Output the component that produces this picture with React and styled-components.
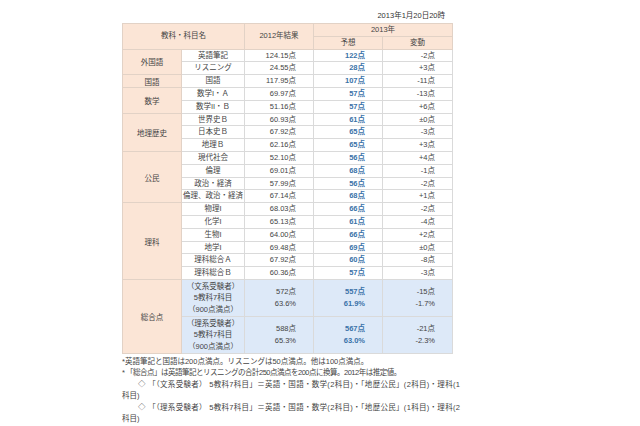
import React from 'react'
import styled, { createGlobalStyle } from 'styled-components'

const GlobalStyle = createGlobalStyle`
  html, body {
    margin: 0;
    padding: 0;
    background: #fff;
  }
  body {
    font-family: "Liberation Sans", "Noto Sans CJK JP", sans-serif;
    color: #444;
  }
`

const rows = [
  { group: '外国語', span: 2, name: '英語筆記', prev: '124.15点', pred: '122点', diff: '-2点' },
  { name: 'リスニング', prev: '24.55点', pred: '28点', diff: '+3点' },
  { group: '国語', span: 1, name: '国語', prev: '117.95点', pred: '107点', diff: '-11点' },
  { group: '数学', span: 2, name: '数学I・Ａ', prev: '69.97点', pred: '57点', diff: '-13点' },
  { name: '数学II・Ｂ', prev: '51.16点', pred: '57点', diff: '+6点' },
  { group: '地理歴史', span: 3, name: '世界史Ｂ', prev: '60.93点', pred: '61点', diff: '±0点' },
  { name: '日本史Ｂ', prev: '67.92点', pred: '65点', diff: '-3点' },
  { name: '地理Ｂ', prev: '62.16点', pred: '65点', diff: '+3点' },
  { group: '公民', span: 4, name: '現代社会', prev: '52.10点', pred: '56点', diff: '+4点' },
  { name: '倫理', prev: '69.01点', pred: '68点', diff: '-1点' },
  { name: '政治・経済', prev: '57.99点', pred: '56点', diff: '-2点' },
  { name: '倫理、政治・経済', prev: '67.14点', pred: '68点', diff: '+1点' },
  { group: '理科', span: 6, name: '物理I', prev: '68.03点', pred: '66点', diff: '-2点' },
  { name: '化学I', prev: '65.13点', pred: '61点', diff: '-4点' },
  { name: '生物I', prev: '64.00点', pred: '66点', diff: '+2点' },
  { name: '地学I', prev: '69.48点', pred: '69点', diff: '±0点' },
  { name: '理科総合Ａ', prev: '67.92点', pred: '60点', diff: '-8点' },
  { name: '理科総合Ｂ', prev: '60.36点', pred: '57点', diff: '-3点' },
]

const totals = [
  { label: '（文系受験者）', prev: ['572点', '63.6%'], pred: ['557点', '61.9%'], diff: ['-15点', '-1.7%'] },
  { label: '（理系受験者）', prev: ['588点', '65.3%'], pred: ['567点', '63.0%'], diff: ['-21点', '-2.3%'] },
]

const App = () => {
  return (
    <Page>
      <GlobalStyle />
      <Stamp>2013年1月20日20時</Stamp>
      <Table>
        <colgroup>
          <col style={{ width: 59 }} />
          <col style={{ width: 63 }} />
          <col style={{ width: 69 }} />
          <col style={{ width: 69 }} />
          <col style={{ width: 70 }} />
        </colgroup>
        <thead>
          <tr>
            <Th colSpan={2} rowSpan={2}>教科・科目名</Th>
            <Th rowSpan={2}>2012年結果</Th>
            <Th colSpan={2}>2013年</Th>
          </tr>
          <tr>
            <Th>予想</Th>
            <Th>変動</Th>
          </tr>
        </thead>
        <tbody>
          {rows.map((r, i) => (
            <tr key={i}>
              {r.group && <Group rowSpan={r.span}>{r.group}</Group>}
              <Td>{r.name}</Td>
              <Td $align="right">{r.prev}</Td>
              <Td $align="right" $strong>{r.pred}</Td>
              <Td $align="right">{r.diff}</Td>
            </tr>
          ))}
          {totals.map((t, i) => (
            <tr key={'t' + i}>
              {i === 0 && <Group rowSpan={2}>総合点</Group>}
              <Td $total>
                <Lines>
                  <span>{t.label}</span>
                  <span>5教科7科目</span>
                  <span>（900点満点）</span>
                </Lines>
              </Td>
              <Td $total $align="right">
                <Lines>{t.prev.map((v) => <span key={v}>{v}</span>)}</Lines>
              </Td>
              <Td $total $align="right" $strong>
                <Lines>{t.pred.map((v) => <span key={v}>{v}</span>)}</Lines>
              </Td>
              <Td $total $align="right">
                <Lines>{t.diff.map((v) => <span key={v}>{v}</span>)}</Lines>
              </Td>
            </tr>
          ))}
        </tbody>
      </Table>
      <Notes>
        <Line>*英語筆記と国語は200点満点。リスニングは50点満点。他は100点満点。</Line>
        <Line $spacing="-0.5px">* 「総合点」は英語筆記とリスニングの合計250点満点を200点に換算。2012年は推定値。</Line>
        <Line $indent $spacing="0.3px">◇ 「（文系受験者） 5教科7科目」＝英語・国語・数学(2科目)・「地歴公民」(2科目)・理科(1</Line>
        <Line>科目)</Line>
        <Line $indent $spacing="0.3px">◇ 「（理系受験者） 5教科7科目」＝英語・国語・数学(2科目)・「地歴公民」(1科目)・理科(2</Line>
        <Line>科目)</Line>
      </Notes>
    </Page>
  )
}

export default App

const Page = styled.div`
  width: 330px;
  margin-left: 122px;
  padding-top: 10px;
  font-size: 7.5px;
`

const Stamp = styled.div`
  text-align: right;
  padding-right: 7px;
  line-height: 12px;
  height: 13px;
  color: #333;
`

const Table = styled.table`
  width: 330px;
  table-layout: fixed;
  border-collapse: collapse;
  font-size: 7.5px;
  color: #444;
`

const Th = styled.th`
  background: #fbe5d6;
  border: 1px solid #e2d2c6;
  font-weight: normal;
  height: 11.8px;
  line-height: 11.8px;
  padding: 0;
  text-align: center;
  color: #444;
`

const Group = styled.td`
  background: #fbe5d6;
  border: 1px solid #e2d2c6;
  padding: 0;
  text-align: center;
  vertical-align: middle;
`

const Td = styled.td`
  background: ${(p) => (p.$total ? '#dde9f8' : '#fff')};
  border: 1px solid #dadada;
  height: 11.8px;
  line-height: 11.8px;
  padding: 0 ${(p) => (p.$align === 'right' ? '17px' : '0')} 0 0;
  text-align: ${(p) => p.$align || 'center'};
  vertical-align: middle;
  white-space: nowrap;
  font-weight: ${(p) => (p.$strong ? 'bold' : 'normal')};
  color: ${(p) => (p.$strong ? '#3a72a8' : '#444')};
`

const Lines = styled.div`
  display: flex;
  flex-direction: column;
  line-height: 11.6px;
  padding: 0.6px 0;
`

const Notes = styled.div`
  margin-top: 2px;
  width: 340px;
  font-size: 7.5px;
  line-height: 11.5px;
  color: #444;
`

const Line = styled.div`
  white-space: nowrap;
  padding-left: ${(p) => (p.$indent ? '16px' : '0')};
  letter-spacing: ${(p) => p.$spacing || '0'};
`
